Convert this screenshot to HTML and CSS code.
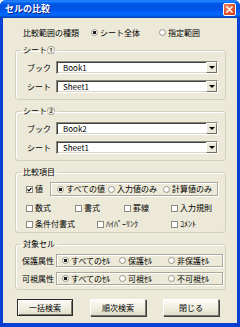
FILE: index.html
```html
<!DOCTYPE html>
<html lang="ja">
<head>
  <meta charset="UTF-8" />
  <title>セルの比較</title>
  <link rel="stylesheet" href="styles.css">
</head>
<body>
  <div class="window">
    <div class="titlebar">
      <span class="title">セルの比較</span>
      <span class="close">
        <svg width="7" height="7" viewBox="0 0 7 7"><path d="M0.8 0.8L6.2 6.2M6.2 0.8L0.8 6.2" stroke="#fff" stroke-width="1.4" stroke-linecap="round"/></svg>
      </span>
    </div>

    <div class="dialog">
      <div class="kind-row">
        <span class="kind-label">比較範囲の種類</span>
        <span class="opt kind-opt"><span class="dot on"></span>シート全体</span>
        <span class="opt"><span class="dot"></span>指定範囲</span>
      </div>

      <!-- シート① -->
      <fieldset class="group">
        <legend>シート①</legend>
        <div class="sheet-rows">
          <div class="field">
            <span class="field-label">ブック</span>
            <div class="combo"><span>Book1</span><span class="drop"></span></div>
          </div>
          <div class="field">
            <span class="field-label">シート</span>
            <div class="combo"><span>Sheet1</span><span class="drop"></span></div>
          </div>
        </div>
      </fieldset>

      <!-- シート② -->
      <fieldset class="group">
        <legend>シート②</legend>
        <div class="sheet-rows">
          <div class="field">
            <span class="field-label">ブック</span>
            <div class="combo"><span>Book2</span><span class="drop"></span></div>
          </div>
          <div class="field">
            <span class="field-label">シート</span>
            <div class="combo"><span>Sheet1</span><span class="drop"></span></div>
          </div>
        </div>
      </fieldset>

      <!-- 比較項目 -->
      <fieldset class="group">
        <legend>比較項目</legend>
        <div class="items">
          <div class="value-row">
            <span class="opt value-check">
              <span class="box"><svg width="5" height="5" viewBox="0 0 5 5"><path d="M0.5 2.4L1.9 3.8L4.5 0.9" fill="none" stroke="#000" stroke-width="1.2"/></svg></span>値
            </span>
            <div class="frame value-frame">
              <span class="opt w51"><span class="dot on"></span>すべての値</span>
              <span class="opt w55"><span class="dot"></span>入力値のみ</span>
              <span class="opt"><span class="dot"></span>計算値のみ</span>
            </div>
          </div>
          <div class="check-row">
            <span class="opt w49"><span class="box"></span>数式</span>
            <span class="opt w49"><span class="box"></span>書式</span>
            <span class="opt w47"><span class="box"></span>罫線</span>
            <span class="opt"><span class="box"></span>入力規則</span>
          </div>
          <div class="check-row">
            <span class="opt w71"><span class="box"></span>条件付書式</span>
            <span class="opt w74"><span class="box"></span>ﾊｲﾊﾟｰﾘﾝｸ</span>
            <span class="opt"><span class="box"></span>ｺﾒﾝﾄ</span>
          </div>
        </div>
      </fieldset>

      <!-- 対象セル -->
      <fieldset class="group">
        <legend>対象セル</legend>
        <div class="target-rows">
          <div class="target-row">
            <span class="target-label">保護属性</span>
            <div class="frame target-frame">
              <span class="opt w57"><span class="dot on"></span>すべてのｾﾙ</span>
              <span class="opt w49"><span class="dot"></span>保護ｾﾙ</span>
              <span class="opt"><span class="dot"></span>非保護ｾﾙ</span>
            </div>
          </div>
          <div class="target-row">
            <span class="target-label">可視属性</span>
            <div class="frame target-frame">
              <span class="opt w57"><span class="dot on"></span>すべてのｾﾙ</span>
              <span class="opt w49"><span class="dot"></span>可視ｾﾙ</span>
              <span class="opt"><span class="dot"></span>不可視ｾﾙ</span>
            </div>
          </div>
        </div>
      </fieldset>

      <div class="buttons">
        <button class="btn default">一括検索</button>
        <button class="btn">順次検索</button>
        <button class="btn">閉じる</button>
      </div>
    </div>
  </div>
</body>
</html>
```

FILE: styles.css
```css
* {
  box-sizing: border-box;
  margin: 0;
  padding: 0;
}
body {
  width: 240px;
  height: 327px;
  overflow: hidden;
  background: #ffffff;
  font-family: "Noto Sans CJK JP", "Liberation Sans", sans-serif;
  font-size: 8px;
  line-height: 10px;
  color: #000;
}
.window {
  width: 240px;
  height: 327px;
  display: flex;
  flex-direction: column;
  background: #0a3fd6;
  border-radius: 6px 6px 0 0;
}
.titlebar {
  height: 18px;
  display: flex;
  align-items: center;
  justify-content: space-between;
  padding: 0 4px 0 5px;
  border-radius: 6px 6px 0 0;
  background: linear-gradient(#0058ee 0%, #3593ff 5%, #127dff 10%, #0262ee 16%, #0057e5 24%, #0054e3 30%, #0055eb 56%, #005bf5 66%, #026afe 76%, #0062ef 86%, #0052d6 92%, #0040ab 100%);
}
.title {
  color: #fff;
  font-weight: 700;
  font-size: 9px;
  text-shadow: 1px 1px 0 #0f1f89;
}
.close {
  width: 13px;
  height: 13px;
  border: 1px solid #fff;
  border-radius: 2px;
  display: flex;
  align-items: center;
  justify-content: center;
  background: radial-gradient(circle at 30% 30%, #f08a6a, #e0522d 55%, #c2340f);
}
.dialog {
  flex: 1;
  margin: 0 3px 4px;
  padding: 8px 11px 0 12px;
  background: #ece9d8;
  display: flex;
  flex-direction: column;
}

/* radio / checkbox */
.opt {
  display: flex;
  align-items: center;
  gap: 2px;
  white-space: nowrap;
}
.dot {
  width: 7px;
  height: 7px;
  flex: none;
  border: 1px solid #9c9a8f;
  border-radius: 50%;
  background: radial-gradient(circle at 40% 40%, #fff 40%, #e2e0d6);
}
.dot.on {
  background: radial-gradient(circle, #1a1a1a 0 1.4px, #fff 1.9px 60%, #e2e0d6);
}
.box {
  width: 7px;
  height: 7px;
  flex: none;
  border: 1px solid #8d8b80;
  background: #fff;
  display: flex;
  align-items: center;
  justify-content: center;
}
.w47 { width: 47px; }
.w49 { width: 49px; }
.w51 { width: 51px; }
.w55 { width: 55px; }
.w57 { width: 57px; }
.w71 { width: 71px; }
.w74 { width: 74px; }

.kind-row {
  height: 13px;
  margin-left: 8px;
  display: flex;
  align-items: center;
}
.kind-label {
  width: 68px;
}
.kind-opt {
  width: 68px;
}

/* group boxes */
.group {
  margin-top: 6px;
  border: 1px solid #d0d0bf;
  border-radius: 3px;
  box-shadow: inset 1px 1px 0 #fff;
}
.group legend {
  margin-left: 5px;
  padding: 0 2px;
  line-height: 10px;
}
.sheet-rows {
  padding: 6px 0 6px;
  display: flex;
  flex-direction: column;
  gap: 6px;
}
.field {
  height: 13px;
  display: flex;
  align-items: center;
}
.field-label {
  width: 35px;
  margin-right: 5px;
  text-align: right;
}
.combo {
  width: 162px;
  height: 13px;
  display: flex;
  align-items: center;
  justify-content: space-between;
  padding: 0 0 0 6px;
  background: #fff;
  border: 1px solid;
  border-color: #8a877b #fff #fff #8a877b;
  box-shadow: inset 1px 1px 0 #404040, inset -1px -1px 0 #d8d4c8;
}
.drop {
  width: 11px;
  height: 11px;
  display: flex;
  align-items: center;
  justify-content: center;
  background: #ece9d8;
  border: 1px solid;
  border-color: #fff #6f6d64 #6f6d64 #fff;
}
.drop::after {
  content: "";
  border-left: 3px solid transparent;
  border-right: 3px solid transparent;
  border-top: 3px solid #000;
}

/* 比較項目 */
.items {
  padding: 5px 0 3px 10px;
  display: flex;
  flex-direction: column;
}
.value-row {
  height: 14px;
  display: flex;
  align-items: center;
}
.value-check {
  width: 24px;
}
.frame {
  display: flex;
  align-items: center;
  border: 1px solid #aca899;
  box-shadow: 1px 1px 0 #fff, inset 1px 1px 0 #fff;
}
.value-frame {
  width: 168px;
  height: 14px;
  padding-left: 6px;
}
.check-row {
  height: 10px;
  margin-top: 6px;
  display: flex;
  align-items: center;
}
.value-row + .check-row {
  margin-top: 7px;
}

/* 対象セル */
.target-rows {
  padding: 5px 0 4px 6px;
  display: flex;
  flex-direction: column;
  gap: 5px;
}
.target-row {
  height: 13px;
  display: flex;
  align-items: center;
}
.target-label {
  width: 34px;
}
.target-frame {
  width: 167px;
  height: 13px;
  padding-left: 5px;
}

/* buttons */
.buttons {
  margin-top: 9px;
  padding-left: 2px;
  display: flex;
  gap: 17px;
}
.btn {
  width: 56px;
  height: 17px;
  font: inherit;
  color: #000;
  background: linear-gradient(#fbfbf8, #ece9d8 70%, #dedbcc);
  border: 1px solid;
  border-color: #fff #7a786e #7a786e #fff;
  box-shadow: 1px 1px 0 #404040;
}
.btn.default {
  border-color: #2a2a2a;
  box-shadow: inset 1px 1px 0 #fff, inset -1px -1px 0 #7a786e;
}
```
